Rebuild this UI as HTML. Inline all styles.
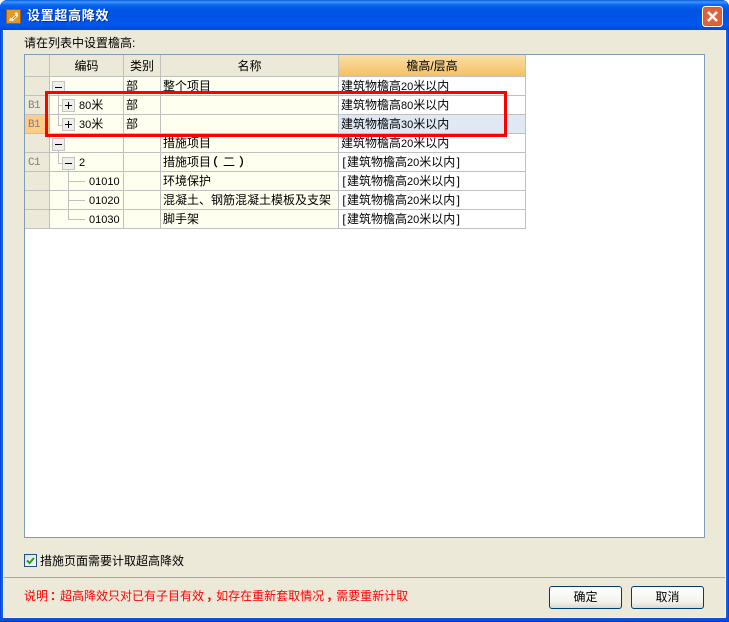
<!DOCTYPE html>
<html lang="zh"><head><meta charset="utf-8"><title>设置超高降效</title>
<style>
html,body{margin:0;padding:0;background:#fff}
body{width:729px;height:622px;position:relative;overflow:hidden;font:12px/14px "Liberation Sans","WenQuanYi Zen Hei","Noto Sans CJK SC",sans-serif;color:#000}
div{position:absolute;box-sizing:border-box}
.t{white-space:nowrap;height:14px;line-height:14px}
b.d{font:11px/14px "Liberation Sans",sans-serif}
i.k{display:inline-block;width:6px;font-style:normal;text-align:center}
.v{width:1px;background:#c0c0c0}
.h{height:1px;background:#c0c0c0}
.box{width:13px;height:13px;border:1px solid #c4c4c4;background:#eeeeea}
.box:before{content:"";position:absolute;left:2px;top:5px;width:7px;height:1px;background:#000}
.p:after{content:"";position:absolute;left:5px;top:2px;width:1px;height:7px;background:#000}
.g{font:11px/14px "Liberation Mono",monospace;letter-spacing:-.6px;color:#808080;left:28px}
.btn{width:73px;height:23px;border:1px solid #003c74;border-radius:3px;background:linear-gradient(#fff,#f3f3ee 70%,#dcd8cd);text-align:center;line-height:21px}
.u{position:relative;left:2px;font-weight:bold}
.l{position:relative;left:-5px;font-weight:bold}
.r{position:relative;left:4px;font-weight:bold}
</style></head><body>
<div style="left:0;top:0;width:729px;height:622px;border-radius:7px 7px 0 0;background:linear-gradient(90deg,#0831c8 0,#0a5ae6 1px,#1166ee 3px,#0a50dc 4px,#0a50dc 725px,#0f62ea 726px,#0a5ae6 728px,#0831c8 729px)"></div>
<div style="left:0;top:617px;width:729px;height:5px;background:linear-gradient(#0a50dc,#0a50dc 3px,#0831c8)"></div>
<div style="left:0;top:0;width:729px;height:30px;border-radius:7px 7px 0 0;background:linear-gradient(#0a5ad8 0,#3d95ff 2px,#0a66ee 5px,#0053e4 10px,#0055ea 20px,#0058ee 25px,#0049d0 30px)"></div>
<div style="left:3px;top:30px;width:723px;height:588px;background:#f6f4ea"></div>
<div style="left:4px;top:30px;width:721px;height:587px;background:#ece9d8"></div>
<svg style="position:absolute;left:6px;top:9px" width="15" height="15" viewBox="0 0 15 15"><rect width="15" height="15" fill="#a85a10"/><rect x="1" y="1" width="13" height="13" fill="#e09a28"/><path d="M3 12 4 9 10 3 12 4 12 7 7 12Z" fill="#fff2c8"/><path d="M5 9 9 5M7 10 10 7" stroke="#c8781c"/></svg>
<div class="t" style="left:27px;top:9px;color:#fff;font-weight:bold;font-size:13px;letter-spacing:.7px;text-shadow:1px 1px 0 #003399">设置超高降效</div>
<svg style="position:absolute;left:702px;top:6px" width="21" height="21" viewBox="0 0 21 21"><rect x=".5" y=".5" width="20" height="20" rx="3" fill="#d9563a" stroke="#fff"/><rect x="2" y="2" width="17" height="17" rx="2" fill="#e0603c"/><path d="M6 6 15 15M15 6 6 15" stroke="#fff" stroke-width="2.6"/></svg>

<div class="t" style="left:24px;top:36px">请在列表中设置檐高:</div>

<div style="left:24px;top:54px;width:681px;height:484px;background:#fff;border:1px solid #7f9db9"></div>
<!-- backgrounds -->
<div style="left:25px;top:55px;width:500px;height:21px;background:#ece9d8"></div>
<div style="left:339px;top:55px;width:186px;height:21px;background:linear-gradient(#fbdfa8,#f4c063)"></div>
<div style="left:25px;top:77px;width:24px;height:151px;background:#ece9d8"></div>
<div style="left:25px;top:115px;width:24px;height:18px;background:#ffcc88"></div>
<div style="left:50px;top:77px;width:288px;height:151px;background:#ffffef"></div>
<div style="left:339px;top:115px;width:186px;height:18px;background:#e0e8f4"></div>
<!-- grid lines -->
<div class="h" style="left:25px;top:76px;width:501px"></div>
<div class="h" style="left:25px;top:95px;width:501px"></div>
<div class="h" style="left:25px;top:114px;width:501px"></div>
<div class="h" style="left:25px;top:133px;width:501px"></div>
<div class="h" style="left:25px;top:152px;width:501px"></div>
<div class="h" style="left:25px;top:171px;width:501px"></div>
<div class="h" style="left:25px;top:190px;width:501px"></div>
<div class="h" style="left:25px;top:209px;width:501px"></div>
<div class="h" style="left:25px;top:228px;width:501px"></div>
<div class="v" style="left:49px;top:55px;height:174px"></div>
<div class="v" style="left:123px;top:55px;height:174px"></div>
<div class="v" style="left:160px;top:55px;height:174px"></div>
<div class="v" style="left:338px;top:55px;height:174px"></div>
<div class="v" style="left:525px;top:55px;height:174px"></div>
<!-- header -->
<div class="t" style="left:50px;top:59px;width:73px;text-align:center">编码</div>
<div class="t" style="left:124px;top:59px;width:36px;text-align:center">类别</div>
<div class="t" style="left:161px;top:59px;width:177px;text-align:center">名称</div>
<div class="t" style="left:339px;top:59px;width:186px;text-align:center">檐高/层高</div>
<!-- tree lines -->
<div class="v" style="left:58px;top:93px;height:32px"></div>
<div class="h" style="left:58px;top:105px;width:5px"></div>
<div class="h" style="left:58px;top:125px;width:5px"></div>
<div class="v" style="left:58px;top:150px;height:14px"></div>
<div class="h" style="left:58px;top:163px;width:5px"></div>
<div class="v" style="left:68px;top:169px;height:50px"></div>
<div class="h" style="left:68px;top:181px;width:17px"></div>
<div class="h" style="left:68px;top:200px;width:17px"></div>
<div class="h" style="left:68px;top:219px;width:17px"></div>
<!-- expanders -->
<div class="box" style="left:52px;top:81px"></div>
<div class="box p" style="left:62px;top:99px"></div>
<div class="box p" style="left:62px;top:118px"></div>
<div class="box" style="left:52px;top:138px"></div>
<div class="box" style="left:62px;top:157px"></div>
<!-- gutter -->
<div class="t g" style="top:99px">B1</div>
<div class="t g" style="top:118px">B1</div>
<div class="t g" style="top:156px">C1</div>
<!-- code -->
<div class="t" style="left:79px;top:98px"><b class="d" style="font-weight:normal">80</b>米</div>
<div class="t" style="left:79px;top:117px"><b class="d" style="font-weight:normal">30</b>米</div>
<div class="t" style="left:79px;top:155px"><b class="d" style="font-weight:normal">2</b></div>
<div class="t" style="left:89px;top:174px"><b class="d" style="font-weight:normal">01010</b></div>
<div class="t" style="left:89px;top:193px"><b class="d" style="font-weight:normal">01020</b></div>
<div class="t" style="left:89px;top:212px"><b class="d" style="font-weight:normal">01030</b></div>
<!-- type -->
<div class="t" style="left:126px;top:79px">部</div>
<div class="t" style="left:126px;top:98px">部</div>
<div class="t" style="left:126px;top:117px">部</div>
<!-- name -->
<div class="t" style="left:163px;top:79px">整个项目</div>
<div class="t" style="left:163px;top:136px">措施项目</div>
<div class="t" style="left:163px;top:155px">措施项目<span class="l">（</span>二<span class="r">）</span></div>
<div class="t" style="left:163px;top:174px">环境保护</div>
<div class="t" style="left:163px;top:193px">混凝土、钢筋混凝土模板及支架</div>
<div class="t" style="left:163px;top:212px">脚手架</div>
<!-- height -->
<div class="t" style="left:341px;top:79px">建筑物檐高<b class="d" style="font-weight:normal">20</b>米以内</div>
<div class="t" style="left:341px;top:98px">建筑物檐高<b class="d" style="font-weight:normal">80</b>米以内</div>
<div class="t" style="left:341px;top:117px">建筑物檐高<b class="d" style="font-weight:normal">30</b>米以内</div>
<div class="t" style="left:341px;top:136px">建筑物檐高<b class="d" style="font-weight:normal">20</b>米以内</div>
<div class="t" style="left:341px;top:155px"><i class="k">[</i>建筑物檐高<b class="d" style="font-weight:normal">20</b>米以内<i class="k">]</i></div>
<div class="t" style="left:341px;top:174px"><i class="k">[</i>建筑物檐高<b class="d" style="font-weight:normal">20</b>米以内<i class="k">]</i></div>
<div class="t" style="left:341px;top:193px"><i class="k">[</i>建筑物檐高<b class="d" style="font-weight:normal">20</b>米以内<i class="k">]</i></div>
<div class="t" style="left:341px;top:212px"><i class="k">[</i>建筑物檐高<b class="d" style="font-weight:normal">20</b>米以内<i class="k">]</i></div>
<!-- red highlight -->
<div style="left:45px;top:91px;width:462px;height:46px;border:3px solid #f00"></div>
<!-- checkbox -->
<div style="left:24px;top:554px;width:13px;height:13px;border:1px solid #1c5180;background:linear-gradient(135deg,#dcdcd7,#fff)"></div>
<svg style="position:absolute;left:24px;top:554px" width="13" height="13" viewBox="0 0 13 13"><path d="M3 6.5 5.5 9 10 4" fill="none" stroke="#21a121" stroke-width="2"/></svg>
<div class="t" style="left:40px;top:554px">措施页面需要计取超高降效</div>
<!-- footer -->
<div style="left:4px;top:577px;width:721px;height:1px;background:#aca899"></div>
<div class="t" style="left:24px;top:589px;color:#f00">说明<span class="u">：</span>超高降效只对已有子目有效<span class="u">，</span>如存在重新套取情况<span class="u">，</span>需要重新计取</div>
<div class="btn" style="left:549px;top:586px">确定</div>
<div class="btn" style="left:631px;top:586px">取消</div>
</body></html>
